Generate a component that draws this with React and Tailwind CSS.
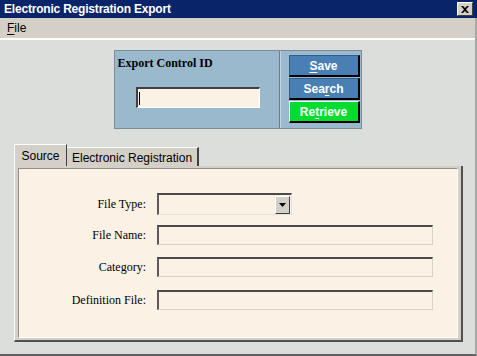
const sans = { fontFamily: '"Liberation Sans", Arial, sans-serif' };

const Field = ({ label, children }) => (
  <div className="flex items-center">
    <span className="w-[138px] pr-[11px] text-right text-[12px] text-black font-['Liberation_Serif',serif]">{label}</span>
    {children}
  </div>
);

const TextBox = () => (
  <div className="w-[276px] h-[20px] bg-[#fbf1e4] border-t-2 border-l-2 border-b border-r border-t-[#4a4a4a] border-l-[#5a5a5a] border-b-[#d6d3cc] border-r-[#d6d3cc]" />
);

const WinButton = ({ label, u, green }) => {
  const i = label.indexOf(u);
  return (
    <button
      className={`w-[71px] h-[22px] flex items-center justify-center text-white font-bold text-[12px] font-['Liberation_Sans',Arial,sans-serif] border-t border-l border-b-2 border-r-2 border-b-black border-r-black ${
        green ? 'bg-[#00dd2e] border-t-white border-l-white' : 'bg-[#4a7fb3] border-t-[#2f5f8f] border-l-[#2f5f8f]'
      }`}
    >
      {label.slice(0, i)}
      <span className="underline underline-offset-2">{u}</span>
      {label.slice(i + 1)}
    </button>
  );
};

export default function App() {
  return (
    <div className="w-[477px] h-[356px] bg-[#dcdedb] flex flex-col overflow-hidden" style={sans}>
      {/* title bar */}
      <div className="h-[18px] bg-[#0a246a] flex items-center justify-between pl-[4px] pr-[4px] shrink-0">
        <span className="text-white font-bold text-[12px] leading-none tracking-[-0.2px]">Electronic Registration Export</span>
        <div className="w-[16px] h-[14px] bg-[#d4d0c8] border-t border-l border-t-white border-l-white border-b border-r border-b-[#404040] border-r-[#404040] flex items-center justify-center">
          <svg width="8" height="7" viewBox="0 0 8 7">
            <path d="M0 0h2l2 2 2-2h2L5 3.5 8 7H6L4 5 2 7H0l3-3.5z" fill="black" />
          </svg>
        </div>
      </div>

      <div className="flex-1 flex flex-col border-r-2 border-r-[#a8a8a8] border-b-2 border-b-[#606060]">
        {/* menu bar */}
        <div className="h-[20px] bg-[#d4d0c8] flex items-center pl-[7px] shrink-0">
          <span className="text-[12px] text-black">
            <span className="underline underline-offset-2">F</span>ile
          </span>
        </div>
        <div className="h-[2px] bg-white shrink-0" />

        {/* export control panel */}
        <div className="flex justify-center mt-[10px]">
          <div className="flex h-[79px] border border-[#7d8b97] bg-[#9bb9cd]">
            <div className="w-[164px] pl-[3px] pt-[3px] flex flex-col">
              <span className="font-bold text-[12px] text-black font-['Liberation_Serif',serif]">Export Control ID</span>
              <div className="ml-[18px] mt-[15px] w-[124px] h-[21px] bg-[#fbf1e4] border-t-2 border-l-2 border-b border-r border-t-[#404040] border-l-[#404040] border-b-white border-r-white flex items-center pl-[1px]">
                <div className="w-[1px] h-[13px] bg-black" />
              </div>
            </div>
            <div className="w-[2px] bg-[#6e7d89] border-r border-r-[#c4d4de]" />
            <div className="w-[80px] flex flex-col gap-[1px] pl-[8px] pt-[4px]">
              <WinButton label="Save" u="S" />
              <WinButton label="Search" u="r" />
              <WinButton label="Retrieve" u="t" green />
            </div>
          </div>
        </div>

        {/* tabs */}
        <div className="ml-[14px] mt-[15px] flex items-end h-[22px]">
          <div className="h-[22px] w-[53px] bg-[#d4d0c8] border-t border-l border-t-white border-l-white border-r border-r-[#404040] flex items-start justify-center pt-[2px] text-[12px] text-black">
            Source
          </div>
          <div className="h-[19px] px-[5px] bg-[#d4d0c8] border-t border-t-white border-r-2 border-r-[#404040] flex items-start pt-[1px] text-[12px] text-black">
            Electronic Registration
          </div>
        </div>

        {/* tab body */}
        <div className="ml-[14px] w-[449px] h-[176px] bg-[#d4d0c8] border-l border-l-white border-b-2 border-r-2 border-b-[#505050] border-r-[#505050] px-[3px] pb-[2px] pt-[2px]">
          <div className="h-full bg-[#fbf1e4] border-t border-l border-t-[#909090] border-l-[#909090] border-b border-r border-b-white border-r-white flex flex-col pt-[24px]">
            <Field label="File Type:">
              <div className="w-[135px] h-[22px] bg-[#fbf1e4] border-t-2 border-l-2 border-b border-r border-t-[#4a4a4a] border-l-[#5a5a5a] border-b-[#e4e2dc] border-r-[#e4e2dc] flex justify-end items-center pr-[1px]">
                <div className="w-[15px] h-[18px] bg-[#d4d0c8] border-t border-l border-t-white border-l-white border-b border-r border-b-[#404040] border-r-[#404040] flex items-center justify-center">
                  <svg width="7" height="4" viewBox="0 0 7 4">
                    <path d="M0 0h7L3.5 4z" fill="black" />
                  </svg>
                </div>
              </div>
            </Field>
            <div className="mt-[10px]">
              <Field label="File Name:">
                <TextBox />
              </Field>
            </div>
            <div className="mt-[12px]">
              <Field label="Category:">
                <TextBox />
              </Field>
            </div>
            <div className="mt-[13px]">
              <Field label="Definition File:">
                <TextBox />
              </Field>
            </div>
          </div>
        </div>
      </div>
    </div>
  );
}
